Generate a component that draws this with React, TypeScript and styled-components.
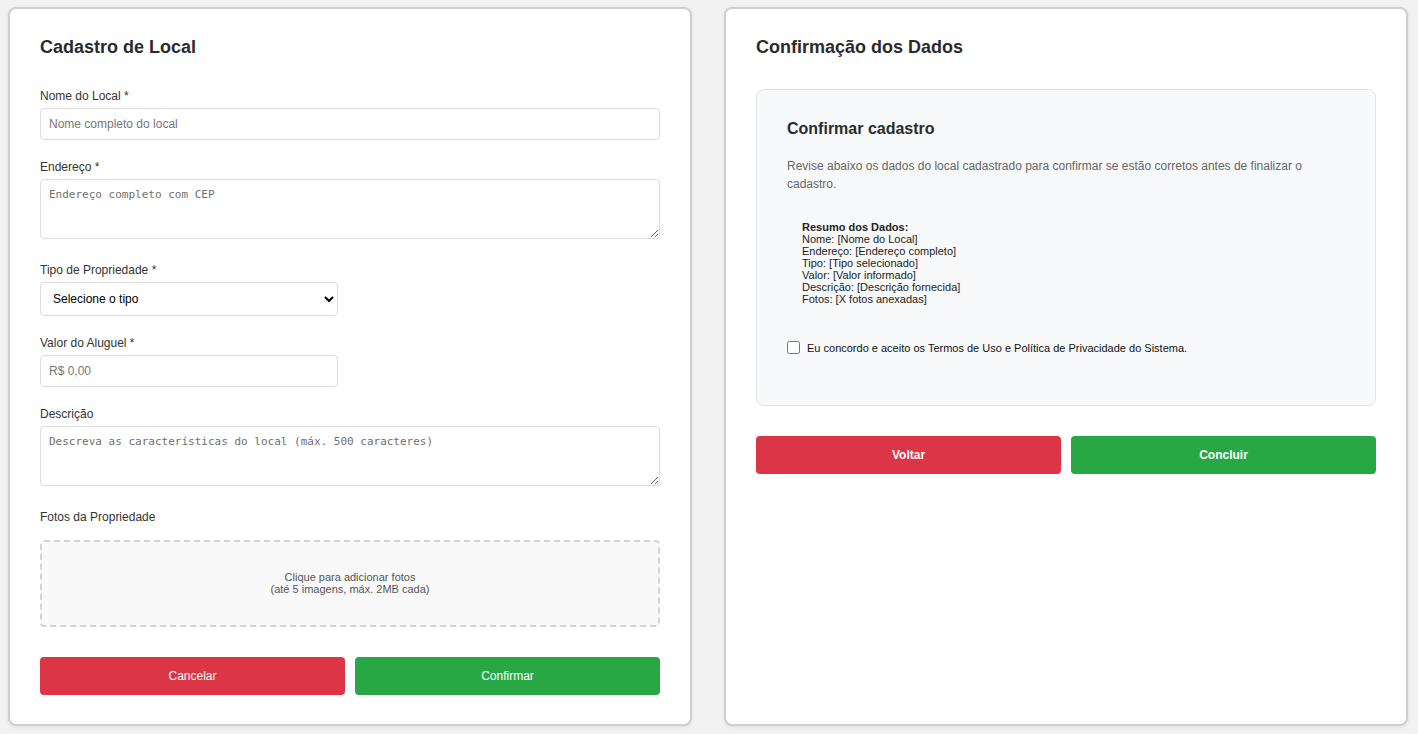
import styled, { createGlobalStyle } from "styled-components";

const GlobalStyle = createGlobalStyle`
  html, body {
    margin: 0;
    padding: 0;
    background: #f2f2f2;
    font-family: "Liberation Sans", Arial, sans-serif;
    color: #333;
  }
`;

const summary = [
  "Nome: [Nome do Local]",
  "Endereço: [Endereço completo]",
  "Tipo: [Tipo selecionado]",
  "Valor: [Valor informado]",
  "Descrição: [Descrição fornecida]",
  "Fotos: [X fotos anexadas]",
];

const App = () => {
  return (
    <>
      <GlobalStyle />
      <Page>
        <Card>
          <Title>Cadastro de Local</Title>

          <Field>
            <Label>Nome do Local *</Label>
            <TextInput placeholder="Nome completo do local" />
          </Field>

          <Field $extra>
            <Label>Endereço *</Label>
            <TextArea placeholder="Endereço completo com CEP" />
          </Field>

          <Field>
            <Label>Tipo de Propriedade *</Label>
            <Select defaultValue="">
              <option value="">Selecione o tipo</option>
              <option value="casa">Casa</option>
              <option value="apartamento">Apartamento</option>
            </Select>
          </Field>

          <Field>
            <Label>Valor do Aluguel *</Label>
            <TextInput $narrow placeholder="R$ 0,00" />
          </Field>

          <Field $extra>
            <Label>Descrição</Label>
            <TextArea placeholder="Descreva as características do local (máx. 500 caracteres)" />
          </Field>

          <Field>
            <Label $spaced>Fotos da Propriedade</Label>
            <DropZone>
              Clique para adicionar fotos
              <br />
              (até 5 imagens, máx. 2MB cada)
            </DropZone>
          </Field>

          <ButtonRow>
            <Button $variant="danger">Cancelar</Button>
            <Button $variant="success">Confirmar</Button>
          </ButtonRow>
        </Card>

        <Card>
          <Title>Confirmação dos Dados</Title>

          <Panel>
            <PanelTitle>Confirmar cadastro</PanelTitle>
            <PanelText>
              Revise abaixo os dados do local cadastrado para confirmar se
              estão corretos antes de finalizar o cadastro.
            </PanelText>

            <Summary>
              <strong>Resumo dos Dados:</strong>
              {summary.map((line) => (
                <div key={line}>{line}</div>
              ))}
            </Summary>

            <Agree>
              <Check type="checkbox" />
              Eu concordo e aceito os Termos de Uso e Política de Privacidade do
              Sistema.
            </Agree>
          </Panel>

          <ButtonRow $bold>
            <Button $variant="danger">Voltar</Button>
            <Button $variant="success">Concluir</Button>
          </ButtonRow>
        </Card>
      </Page>
    </>
  );
};

export default App;

const Page = styled.div`
  display: grid;
  grid-template-columns: 1fr 1fr;
  gap: 32px;
  padding: 7px 10px 8px 8px;
  box-sizing: border-box;
  height: 734px;
`;

const Card = styled.div`
  background: #fff;
  border: 2px solid #cfcfcf;
  border-radius: 8px;
  box-shadow: 0 1px 4px rgba(0, 0, 0, 0.08);
  padding: 26px 30px;
  box-sizing: border-box;
`;

const Title = styled.h2`
  margin: 0 0 29px;
  font-size: 18px;
  line-height: 24px;
  font-weight: bold;
  color: #2b2b2b;
`;

const Field = styled.div<{ $extra?: boolean }>`
  margin-bottom: ${(p) => (p.$extra ? 23 : 19)}px;
`;

const Label = styled.label<{ $spaced?: boolean }>`
  display: block;
  font-size: 12px;
  line-height: 15px;
  padding-top: 1px;
  color: #333;
  margin-bottom: ${(p) => (p.$spaced ? 15 : 4)}px;
`;

const controlBase = `
  display: block;
  box-sizing: border-box;
  border: 1px solid #dcdcdc;
  border-radius: 4px;
  background: #fff;
  outline: none;
`;

const TextInput = styled.input<{ $narrow?: boolean }>`
  ${controlBase}
  width: ${(p) => (p.$narrow ? "298px" : "100%")};
  height: 32px;
  padding: 0 8px;
  font-family: "Liberation Sans", Arial, sans-serif;
  font-size: 12px;
  color: #333;

  &::placeholder {
    color: #777;
  }
`;

const TextArea = styled.textarea`
  ${controlBase}
  width: 100%;
  height: 60px;
  padding: 8px;
  resize: vertical;
  font-family: "DejaVu Sans Mono", "Liberation Mono", monospace;
  font-size: 11px;
  line-height: 14px;

  &::placeholder {
    color: #6f6f6f;
  }
`;

const Select = styled.select`
  ${controlBase}
  width: 298px;
  height: 34px;
  padding: 0 8px;
  font-family: "Liberation Sans", Arial, sans-serif;
  font-size: 12px;
  color: #000;
`;

const DropZone = styled.div`
  box-sizing: border-box;
  height: 87px;
  border: 2px dashed #d4d4d4;
  border-radius: 4px;
  background: #f9f9f9;
  display: flex;
  align-items: center;
  justify-content: center;
  text-align: center;
  font-size: 11px;
  line-height: 12px;
  color: #555;
  padding-bottom: 2px;
`;

const ButtonRow = styled.div<{ $bold?: boolean }>`
  display: grid;
  grid-template-columns: 1fr 1fr;
  gap: 10px;
  margin-top: 30px;

  button {
    font-weight: ${(p) => (p.$bold ? "bold" : "normal")};
  }
`;

const Button = styled.button<{ $variant: "danger" | "success" }>`
  height: 38px;
  border: none;
  border-radius: 4px;
  color: #fff;
  font-family: "Liberation Sans", Arial, sans-serif;
  font-size: 12px;
  cursor: pointer;
  background: ${(p) => (p.$variant === "danger" ? "#dc3545" : "#28a745")};
`;

const Panel = styled.div`
  background: #f8f9fa;
  border: 1px solid #e1e4e8;
  border-radius: 8px;
  padding: 29px 30px 0;
  height: 317px;
  box-sizing: border-box;
  margin-top: 30px;
`;

const PanelTitle = styled.h3`
  margin: 0 0 18px;
  font-size: 16px;
  line-height: 20px;
  font-weight: bold;
  color: #2b2b2b;
`;

const PanelText = styled.p`
  margin: 0 0 28px;
  font-size: 12px;
  line-height: 18px;
  color: #666;
`;

const Summary = styled.div`
  padding-left: 15px;
  font-size: 11px;
  line-height: 12px;
  color: #222;
  margin-bottom: 36px;
`;

const Agree = styled.label`
  display: flex;
  align-items: center;
  gap: 7px;
  font-size: 11px;
  color: #111;
`;

const Check = styled.input`
  margin: 0;
  width: 13px;
  height: 13px;
`;
